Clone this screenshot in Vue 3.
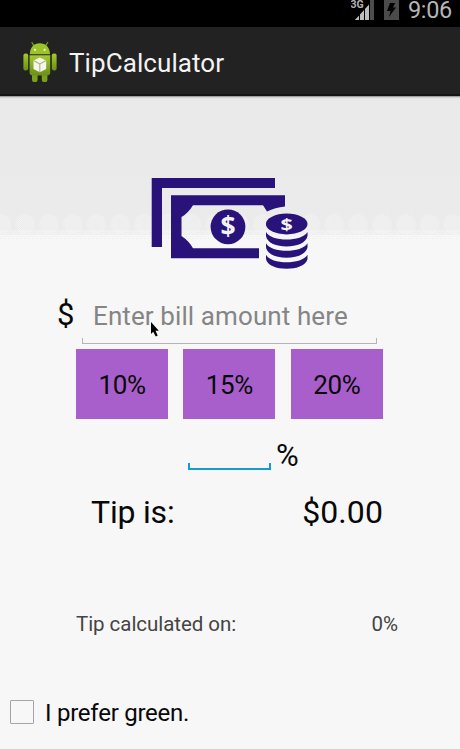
<script setup>
import { ref, computed } from 'vue'

const bill = ref('')
const custom = ref('')
const percent = ref(0)
const green = ref(false)
const options = [10, 15, 20]
const tip = computed(() => '$' + ((Number(bill.value) || 0) * percent.value / 100).toFixed(2))
</script>

<template>
  <div class="screen" :class="{ green }">
    <header class="status">
      <svg class="signal" width="24" height="20" viewBox="0 0 24 20">
        <path d="M4 20 23 1V20Z" fill="#565656" />
        <path d="M19 0H23V20H19Z" fill="#4c4c4c" />
        <path d="M4 20 18 4.5V20Z" fill="#bdbdbd" />
        <path d="M8.5 9V20M13.5 7V20M18.5 0V20" stroke="#000" stroke-width="1" />
        <path d="M0 0H14V8H0Z" fill="#000" />
        <text x="-.5" y="7.8" font-size="10.5" font-weight="700" fill="#b4b4b4">3G</text>
      </svg>
      <svg class="battery" width="15" height="20" viewBox="0 0 15 20">
        <path d="M0 0H15V20H0Z" fill="#4b4b4b" />
        <path d="M6 3H11L9 7.5H12L5 17 6.5 11H3Z" fill="#000" />
      </svg>
      <span class="clock">9:06</span>
    </header>

    <div class="bar">
      <svg class="robot" width="34" height="42" viewBox="0 0 34 42">
        <defs>
          <linearGradient id="skin" x1="0" y1="0" x2="0" y2="1">
            <stop offset="0" stop-color="#a6cb2d" />
            <stop offset="1" stop-color="#6a8f17" />
          </linearGradient>
        </defs>
        <path d="M9 1.5 11 5M24.7 1.5 22.4 5" stroke="#799c25" stroke-width="1.3" stroke-linecap="round" />
        <path d="M6.8 13.2C7 6.2 11 2.3 16.8 2.3S26.8 6.2 27 13.2Z" fill="#9cc32a" />
        <circle cx="12" cy="8.8" r="1.1" fill="#f1f7d8" />
        <circle cx="21.6" cy="8.8" r="1.1" fill="#f1f7d8" />
        <rect x=".4" y="12.5" width="4.8" height="17" rx="2" fill="url(#skin)" />
        <rect x="28.8" y="12.5" width="4.8" height="17" rx="2" fill="url(#skin)" />
        <rect x="9" y="29" width="5.6" height="12" rx="2.6" fill="#7a9f1c" />
        <rect x="18.8" y="29" width="5.6" height="12" rx="2.6" fill="#7a9f1c" />
        <path d="M6.6 14.2H27.2V31.5Q27.2 34.5 24 34.5H9.8Q6.6 34.5 6.6 31.5Z" fill="url(#skin)" />
        <path d="M16.8 16.6 23.2 19.5V28L16.8 31.3 10.5 28V19.5Z" fill="#f5f6ed" />
        <path d="M10.9 19.8 16.8 23 22.8 19.8M16.8 23V31" fill="none" stroke="#a1b777" stroke-width="1.1" />
      </svg>
      <h1>TipCalculator</h1>
    </div>

    <main>
      <svg class="backdrop" width="460" height="34">
        <defs>
          <pattern id="dots" width="2" height="2" patternUnits="userSpaceOnUse">
            <path d="M0 0H1V1H0ZM1 1H2V2H1Z" fill="#f7f7f7" />
          </pattern>
          <pattern id="sparse" width="4" height="4" patternUnits="userSpaceOnUse">
            <path d="M0 0H1V1H0ZM2 2H3V3H2Z" fill="#ebebeb" />
          </pattern>
          <pattern id="scallops" x="13" width="23.8" height="34" patternUnits="userSpaceOnUse">
            <circle cx="11.9" cy="14" r="10" fill="url(#dots)" opacity=".6" />
          </pattern>
        </defs>
        <rect y="20" width="460" height="14" fill="#f7f7f7" />
        <rect y="20" width="460" height="5" fill="#f1f1f1" />
        <rect y="20" width="460" height="10" fill="url(#sparse)" />
        <rect width="460" height="28" fill="url(#scallops)" />
      </svg>

      <svg class="money" width="158" height="94" viewBox="0 0 158 94">
        <g fill="#29127a">
          <path d="M.7 2H124V12H11V71H.7Z" />
          <path fill-rule="evenodd" d="M20 19.3H134V30.5Q124 31.5 116 35.5L112 29.3H42Q37 37.5 30.5 41V60Q38 65 42 72.3H108V82.3H20Z" />
          <circle cx="77" cy="50.8" r="17.4" />
          <ellipse cx="135.7" cy="48" rx="20.8" ry="10.4" />
          <path d="M115 56C120 66 151 66 156.5 56V60C154 74 117 74 115 60Z" />
          <path d="M115 67.3C120 77.3 151 77.3 156.5 67.3V71.3C154 85.3 117 85.3 115 71.3Z" />
          <path d="M115 78.8C120 88.8 151 88.8 156.5 78.8V83C154 96 117 96 115 83Z" />
        </g>
        <text class="coin" x="77" y="60" font-size="26.5">$</text>
        <text class="coin" transform="translate(135.7 53.5) scale(1.35 1)" font-size="16">$</text>
      </svg>

      <div class="bill">
        <span class="dollar">$</span>
        <label class="field">
          <input v-model="bill" placeholder="Enter bill amount here">
        </label>
        <svg class="cursor" width="10" height="15" viewBox="0 0 10 15">
          <path d="M1 0V12L3.2 9.8 5.7 14.5 7.7 13.5 5.5 8.8H8.8Z" fill="#000" />
        </svg>
      </div>

      <div class="options">
        <button v-for="o in options" :key="o" @click="percent = o">{{ o }}%</button>
      </div>

      <div class="custom">
        <input v-model="custom" @input="percent = Number(custom) || 0">
        <span>%</span>
      </div>

      <div class="result"><span>Tip is:</span><span class="amount">{{ tip }}</span></div>
      <div class="detail"><span>Tip calculated on:</span><span>{{ percent }}%</span></div>

      <label class="prefer">
        <input v-model="green" type="checkbox">
        <span>I prefer green.</span>
      </label>
    </main>
  </div>
</template>

<style>
body { margin: 0; background: #f7f7f7; }
</style>

<style scoped>
.screen, .screen input, .screen button { font-family: Roboto, sans-serif; }
.screen {
  width: 460px;
  height: 749px;
  overflow: hidden;
  display: flex;
  flex-direction: column;
  box-sizing: border-box;
  color: #080808;
}
.status {
  height: 27px;
  flex: none;
  background: #000;
  display: flex;
  align-items: flex-start;
  justify-content: flex-end;
  padding-right: 8px;
  box-sizing: border-box;
}
.signal { margin-right: 9px; }
.battery { margin-right: 9px; }
.clock { color: #b5b5b5; font-size: 23.5px; line-height: 20px; letter-spacing: -0.3px; }
.bar {
  height: 69px;
  flex: none;
  box-sizing: border-box;
  padding-left: 23px;
  background: #222;
  border-bottom: 2px solid #151515;
  display: flex;
  align-items: center;
  gap: 12px;
}
.robot { margin-top: 3px; }
h1 { margin: 5px 0 0; font-size: 26px; line-height: 30px; font-weight: 400; letter-spacing: 0.08px; color: #f3f3f3; }
main {
  position: relative;
  flex: 1;
  display: flex;
  flex-direction: column;
  background: linear-gradient(#a0a0a0 0 1px, #d5d5d5 1px 2px, #e3e3e3 2px 3px, #eaeaea 3px, #ebebeb 137px, #f7f7f7 137px);
}
.backdrop { position: absolute; left: 0; top: 114px; }
.money { position: relative; margin: 80px 0 0 151px; flex: none; }
.coin { font-family: "Open Sans", sans-serif; font-weight: 700; text-anchor: middle; fill: #f2f2f2; }
.bill { position: relative; display: flex; height: 54px; margin: 20px 0 0 58px; }
.dollar { width: 24px; margin-left: -1px; padding-right: 1px; box-sizing: content-box; font-size: 31px; line-height: 50px; }
.field {
  width: 295px;
  height: 54px;
  box-sizing: border-box;
  background:
    linear-gradient(#b4b4b4, #b4b4b4) 0 100% / 100% 1px no-repeat,
    linear-gradient(#b4b4b4, #b4b4b4) 0 100% / 1px 6px no-repeat,
    linear-gradient(#b4b4b4, #b4b4b4) 100% 100% / 1px 6px no-repeat;
}
.field input {
  width: 100%;
  height: 52px;
  padding: 0 0 0 11px;
  box-sizing: border-box;
  border: 0;
  outline: 0;
  background: none;
  font-size: 26px;
  letter-spacing: 0.1px;
  color: #080808;
}
.field input::placeholder { color: #858585; opacity: 1; }
.cursor { position: absolute; left: 92px; top: 32px; }
.options { display: flex; gap: 15.4px; margin: 5px 0 0 76px; }
button {
  width: 92px;
  height: 70px;
  padding: 2px 0 0;
  border: 0;
  background: #a95fcb;
  font-size: 26px;
  letter-spacing: -0.4px;
  color: #080808;
}
.custom { display: flex; align-items: flex-end; height: 51px; margin-left: 188px; }
.custom input {
  width: 83px;
  height: 40px;
  box-sizing: border-box;
  border: 0;
  outline: 0;
  padding: 0 6px;
  background:
    linear-gradient(#149ccd, #149ccd) 0 100% / 100% 2px no-repeat,
    linear-gradient(#149ccd, #149ccd) 0 100% / 2px 7px no-repeat,
    linear-gradient(#149ccd, #149ccd) 100% 100% / 2px 7px no-repeat;
}
.custom span { margin-left: 5px; font-size: 31px; line-height: 28px; }
.result { display: flex; justify-content: space-between; margin: 22px 77px 0 91px; font-size: 32px; line-height: 40px; letter-spacing: -0.2px; }
.amount { letter-spacing: 0.1px; }
.detail { display: flex; justify-content: space-between; margin: 77px 62px 0 76px; font-size: 20.5px; line-height: 30px; letter-spacing: -0.05px; color: #444; }
.prefer { display: flex; align-items: center; gap: 11px; margin: 57px 0 0 10px; font-size: 24px; line-height: 30px; letter-spacing: -0.25px; }
.prefer span { padding-top: 2px; }
.prefer input {
  appearance: none;
  width: 24px;
  height: 24px;
  margin: 0;
  box-sizing: border-box;
  border: 1.5px solid #a5a5a5;
  border-radius: 1px;
}
.prefer input:checked { background: #669900; }
.green button { background: #7cc05c; }
</style>
